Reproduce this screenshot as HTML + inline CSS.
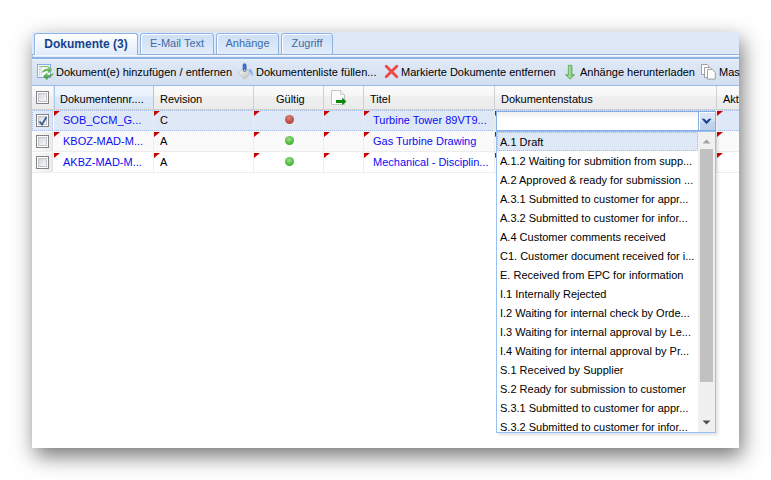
<!DOCTYPE html>
<html><head><meta charset="utf-8">
<style>
*{box-sizing:border-box;margin:0;padding:0}
html,body{width:771px;height:480px;overflow:hidden;background:#fff;font-family:"Liberation Sans",sans-serif;font-size:11px;color:#000}
div,svg{position:absolute}
#shadow{left:32px;top:32px;width:707px;height:416px;background:#fff;box-shadow:3px 8px 20px rgba(0,0,0,.55)}
.t{white-space:nowrap}
.tab{border:1px solid #8db2e3;border-bottom:none;border-radius:3px 3px 0 0;box-shadow:inset 1px 1px 0 #fff;background:linear-gradient(#cddff7,#e2ecfa);color:#416aa3;font-size:11px;text-align:center;line-height:19px}
.tab.act{background:linear-gradient(#fff 0,#f3f7fd 40%,#deebfb 100%);color:#15428b;font-weight:bold;font-size:12px;line-height:20px}
.hc{top:88px;height:23px;line-height:22px;white-space:nowrap;color:#000}
.vs{width:1px;background:#d0d0d0}
.vr{width:1px;background:#ededed}
.lnk{color:#0c0cf4}
.dirty{width:0;height:0;border-top:5px solid #c80000;border-right:6px solid transparent}
.cb{width:13px;height:13px;border:1px solid #838383;background:#fff}
.cb:after{content:"";box-sizing:border-box;position:absolute;left:1px;top:1px;width:9px;height:9px;border:1px solid #c2c6cc;background:linear-gradient(135deg,#d4d7dc,#f9f9f9)}
.li{left:496px;width:202px;height:19px;line-height:21px;padding-left:4px;white-space:nowrap;color:#000;font-size:11px}
</style></head><body>
<div id="shadow"></div>
<!-- tab strip -->
<div style="left:32px;top:32px;width:707px;height:25px;background:#dfe8f6"></div>
<div style="left:32px;top:54px;width:707px;height:1px;background:#8db2e3"></div>
<div style="left:32px;top:55px;width:707px;height:2px;background:linear-gradient(#f6f9fe 50%,#e4eefb 50%);border-left:1px solid #a9c6ec"></div>
<div style="left:32px;top:57px;width:707px;height:1px;background:#8cb1e2"></div>
<div style="left:32px;top:58px;width:707px;height:1px;background:#90b4e4"></div>
<div class="tab act" style="left:34px;top:33px;width:104px;height:22px">Dokumente (3)</div>
<div class="tab" style="left:140px;top:33px;width:74px;height:22px;border-bottom:1px solid #8db2e3">E-Mail Text</div>
<div class="tab" style="left:216px;top:33px;width:63px;height:22px;border-bottom:1px solid #8db2e3">Anhänge</div>
<div class="tab" style="left:281px;top:33px;width:52px;height:22px;border-bottom:1px solid #8db2e3">Zugriff</div>
<!-- toolbar -->
<div style="left:32px;top:59px;width:707px;height:27px;background:linear-gradient(#eef3fb 0,#dfe8f5 8%,#d9e4f3 50%,#d3dff0 100%);border-bottom:1px solid #99bbe8"></div>
<div class="t" style="left:56px;top:66px">Dokument(e) hinzufügen / entfernen</div>
<div class="t" style="left:256px;top:66px">Dokumentenliste füllen...</div>
<div class="t" style="left:401px;top:66px">Markierte Dokumente entfernen</div>
<div class="t" style="left:580px;top:66px">Anhänge herunterladen</div>
<div class="t" style="left:719px;top:66px">Mas</div>
<!-- header -->
<div style="left:32px;top:86px;width:707px;height:24px;background:linear-gradient(#fafafa 0,#f7f7f7 45%,#efefef 46%,#ebebeb 100%);border-bottom:1px solid #d0d0d0"></div>
<div style="left:54px;top:86px;width:100px;height:23px;background:linear-gradient(#eef5fd 0,#eaf2fc 45%,#dde9f8 46%,#d9e6f7 100%)"></div>
<div class="vs" style="left:53px;top:86px;height:23px;background:#e4e4e4"></div>
<div style="left:54px;top:86px;height:23px;width:1px;background:#a8c8f0"></div>
<div style="left:153px;top:86px;height:23px;width:1px;background:#a8c8f0"></div>
<div class="vs" style="left:253px;top:86px;height:23px"></div>
<div class="vs" style="left:323px;top:86px;height:23px"></div>
<div class="vs" style="left:363px;top:86px;height:23px"></div>
<div class="vs" style="left:494px;top:86px;height:23px"></div>
<div class="vs" style="left:716px;top:86px;height:23px"></div>
<div class="hc t" style="left:60px">Dokumentennr....</div>
<div class="hc t" style="left:160px">Revision</div>
<div class="hc t" style="left:276px">Gültig</div>
<div class="hc t" style="left:370px">Titel</div>
<div class="hc t" style="left:501px">Dokumentenstatus</div>
<div class="hc t" style="left:723px">Akt</div>
<div class="cb" style="left:36px;top:91px"></div>
<!-- header doc icon -->
<svg style="left:330px;top:90px" width="18" height="16" viewBox="0 0 18 16">
<path d="M1.5 0.5h9l4 4v10h-13z" fill="#fbfbfb" stroke="#c4c4c4"/>
<path d="M10.5 0.5v4h4" fill="#eee" stroke="#d0d0d0"/>
<path d="M6 9.9h6.2v-2.4l4.2 3.9-4.2 3.9v-2.4h-6.2z" fill="#098a09"/>
</svg>
<!-- rows -->
<div style="left:32px;top:110px;width:707px;height:21px;background:#dfe8f6;border-top:1px dotted #a3bae9;border-bottom:1px dotted #a3bae9"></div>
<div style="left:32px;top:131px;width:707px;height:21px;background:#fafafa;border-bottom:1px solid #ededed"></div>
<div style="left:32px;top:152px;width:707px;height:21px;background:#fff;border-bottom:1px solid #ededed"></div>
<div style="left:32px;top:111px;width:21px;height:19px;background:linear-gradient(90deg,#e6effb,#d8e5f6);border-right:1px solid #c4d8f2"></div>
<div style="left:32px;top:131px;width:21px;height:20px;background:linear-gradient(90deg,#fcfcfc 0,#f6f6f6 40%,#ececec 100%);border-right:1px solid #e0e0e0;border-top:1px solid #fff"></div>
<div style="left:32px;top:152px;width:21px;height:20px;background:linear-gradient(90deg,#fcfcfc 0,#f6f6f6 40%,#ececec 100%);border-right:1px solid #e0e0e0;border-top:1px solid #fff"></div>
<div style="left:32px;top:110px;width:1px;height:21px;border-left:1px dotted #a3bae9"></div>
<div class="vr" style="left:53px;top:110px;height:63px;background:#fff"></div>
<div class="vr" style="left:153px;top:110px;height:63px"></div>
<div class="vr" style="left:253px;top:110px;height:63px"></div>
<div class="vr" style="left:323px;top:110px;height:63px"></div>
<div class="vr" style="left:363px;top:110px;height:63px"></div>
<div class="vr" style="left:494px;top:110px;height:63px"></div>
<div class="vr" style="left:716px;top:110px;height:63px"></div>
<div class="cb" style="left:36px;top:114px"></div>
<svg style="left:38px;top:116px" width="10" height="10" viewBox="0 0 10 10"><path d="M1.5 5.5l2.5 3 4.5-7.5" fill="none" stroke="#3a5a98" stroke-width="1.8"/></svg>
<div class="cb" style="left:36px;top:135px"></div>
<div class="cb" style="left:36px;top:156px"></div>
<div class="t lnk" style="left:63px;top:114px">SOB_CCM_G...</div>
<div class="t lnk" style="left:63px;top:135px">KBOZ-MAD-M...</div>
<div class="t lnk" style="left:63px;top:156px">AKBZ-MAD-M...</div>
<div class="t" style="left:160px;top:114px">C</div>
<div class="t" style="left:160px;top:135px">A</div>
<div class="t" style="left:160px;top:156px">A</div>
<div class="t lnk" style="left:373px;top:114px">Turbine Tower 89VT9...</div>
<div class="t lnk" style="left:373px;top:135px">Gas Turbine Drawing</div>
<div class="t lnk" style="left:373px;top:156px">Mechanical - Disciplin...</div>
<div style="left:285px;top:115px;width:9px;height:9px;border-radius:50%;background:radial-gradient(circle at 45% 30%,#dc8378,#bd4d43 60%,#a23d33)"></div>
<div style="left:285px;top:136px;width:9px;height:9px;border-radius:50%;background:radial-gradient(circle at 45% 35%,#9ee08a,#4cb83a 60%,#3a9a2a)"></div>
<div style="left:285px;top:157px;width:9px;height:9px;border-radius:50%;background:radial-gradient(circle at 45% 35%,#9ee08a,#4cb83a 60%,#3a9a2a)"></div>
<div class="dirty" style="left:54px;top:111px"></div>
<div class="dirty" style="left:154px;top:111px"></div>
<div class="dirty" style="left:254px;top:111px"></div>
<div class="dirty" style="left:324px;top:111px"></div>
<div class="dirty" style="left:364px;top:111px"></div>
<div class="dirty" style="left:717px;top:111px"></div>
<div class="dirty" style="left:54px;top:132px"></div>
<div class="dirty" style="left:154px;top:132px"></div>
<div class="dirty" style="left:254px;top:132px"></div>
<div class="dirty" style="left:324px;top:132px"></div>
<div class="dirty" style="left:364px;top:132px"></div>
<div class="dirty" style="left:717px;top:132px"></div>
<div class="dirty" style="left:54px;top:153px"></div>
<div class="dirty" style="left:154px;top:153px"></div>
<div class="dirty" style="left:254px;top:153px"></div>
<div class="dirty" style="left:324px;top:153px"></div>
<div class="dirty" style="left:364px;top:153px"></div>
<div class="dirty" style="left:717px;top:153px"></div>
<div class="dirty" style="left:495px;top:111px"></div>
<div class="dirty" style="left:495px;top:132px"></div>
<div class="dirty" style="left:495px;top:153px"></div>
<!-- combo -->
<div style="left:496px;top:111px;width:220px;height:20px;border:1px solid #84afe3;background:linear-gradient(#eeeeee,#fff 40%)"></div>
<div style="left:698px;top:111px;width:18px;height:20px;border:1px solid #84afe3;background:linear-gradient(#dce8f8 0,#d5e3f6 50%,#c4d7f0 51%,#bcd0ec 100%);box-shadow:inset 1px 1px 0 #fff"></div>
<svg style="left:701px;top:118px" width="12" height="8" viewBox="0 0 12 8"><path d="M0.6 0.7H3.3L5.6 3.1 7.9 0.7H10.6L5.6 6.3z" fill="#1f3f8c"/></svg>
<!-- list -->
<div style="left:496px;top:131px;width:220px;height:302px;border:1px solid #98c0f4;background:#fff;box-shadow:2px 2px 3px rgba(0,0,0,.12)"></div>
<div style="left:497px;top:132px;width:201px;height:19px;background:#dfe8f6;border:1px dotted #a3bae9"></div>
<div class="li" style="top:132px">A.1 Draft</div>
<div class="li" style="top:151px">A.1.2 Waiting for submition from supp...</div>
<div class="li" style="top:170px">A.2 Approved &amp; ready for submission ...</div>
<div class="li" style="top:189px">A.3.1 Submitted to customer for appr...</div>
<div class="li" style="top:208px">A.3.2 Submitted to customer for infor...</div>
<div class="li" style="top:227px">A.4 Customer comments received</div>
<div class="li" style="top:246px">C1. Customer document received for i...</div>
<div class="li" style="top:265px">E. Received from EPC for information</div>
<div class="li" style="top:284px">I.1 Internally Rejected</div>
<div class="li" style="top:303px">I.2 Waiting for internal check by Orde...</div>
<div class="li" style="top:322px">I.3 Waiting for internal approval by Le...</div>
<div class="li" style="top:341px">I.4 Waiting for internal approval by Pr...</div>
<div class="li" style="top:360px">S.1 Received by Supplier</div>
<div class="li" style="top:379px">S.2 Ready for submission to customer</div>
<div class="li" style="top:398px">S.3.1 Submitted to customer for appr...</div>
<div class="li" style="top:417px">S.3.2 Submitted to customer for infor...</div>
<div style="left:698px;top:132px;width:17px;height:300px;background:#f0f0f0"></div>
<div style="left:700px;top:149px;width:13px;height:233px;background:#c1c1c1"></div>
<svg style="left:702px;top:138px" width="9" height="6" viewBox="0 0 9 6"><path d="M0.5 5.5L4.5 1.5 8.5 5.5z" fill="#a3a3a3"/></svg>
<svg style="left:702px;top:420px" width="9" height="6" viewBox="0 0 9 6"><path d="M0.5 0.5L4.5 4.5 8.5 0.5z" fill="#505050"/></svg>
<!-- toolbar icons -->
<svg style="left:36px;top:62px" width="18" height="18" viewBox="0 0 18 18">
<defs><linearGradient id="ga" x1="0" y1="0" x2="0" y2="1"><stop offset="0" stop-color="#a6dc98"/><stop offset="1" stop-color="#3e9b34"/></linearGradient>
<linearGradient id="gb" x1="0" y1="0" x2="0" y2="1"><stop offset="0" stop-color="#8fcf80"/><stop offset="1" stop-color="#2f8a28"/></linearGradient></defs>
<rect x="1.5" y="2.5" width="13" height="13" fill="#fff" stroke="#86abe0"/>
<path d="M3 4.6h9" stroke="#79bf6c" stroke-width="1.1"/>
<rect x="3" y="6" width="3" height="8.5" fill="#c8d9f1"/>
<rect x="4" y="7" width="1.2" height="1.2" fill="#fff"/><rect x="4" y="9" width="1.2" height="1.2" fill="#fff"/><rect x="4" y="11" width="1.2" height="1.2" fill="#fff"/><rect x="4" y="13" width="1.2" height="1.2" fill="#fff"/>
<path d="M6.2 10.5C7 7.8 9.5 6.8 12.3 6.8V4.2L16 7.6 12.3 11V8.8C10 8.8 8 9.3 6.2 10.5z" fill="url(#ga)" stroke="#4da844" stroke-width="0.4"/>
<path d="M17.3 11.6C16.5 14.3 14 15.2 11.2 15.2V17.8L7.3 14.3 11.2 10.9V13.2C13.5 13.2 15.5 12.8 17.3 11.6z" fill="url(#gb)" stroke="#2e8a28" stroke-width="0.4"/>
</svg>
<svg style="left:236px;top:62px" width="20" height="20" viewBox="0 0 20 20">
<defs><linearGradient id="gk" x1="0" y1="0" x2="1" y2="1"><stop offset="0" stop-color="#fdfdfd"/><stop offset="1" stop-color="#bdbdbd"/></linearGradient></defs>
<path d="M2.3 11L8.5 4.8 14.7 11 8.5 17.2z" fill="url(#gk)" stroke="#b4b4b4" stroke-width="0.7"/>
<path d="M13.2 6.6C15.6 7.4 17.2 9.3 16.9 12.4 16.8 13.2 16.4 14 16 14.6 15.6 12.2 14.5 10.5 12.6 9.4z" fill="#88b8ea"/>
<rect x="7" y="1.6" width="3.2" height="8" rx="1.6" fill="#3f73c6" stroke="#2e5cae" stroke-width="0.5"/>
<circle cx="8.6" cy="8.2" r="0.8" fill="#e8f0fb"/>
</svg>
<svg style="left:384px;top:64px" width="15" height="15" viewBox="0 0 15 15">
<path d="M2.2 2.2l10.6 10.6M12.8 2.2L2.2 12.8" stroke="#f24545" stroke-width="2.8" stroke-linecap="round"/>
</svg>
<svg style="left:565px;top:64px" width="11" height="16" viewBox="0 0 11 16">
<defs><linearGradient id="gd" x1="0" y1="0" x2="1" y2="0"><stop offset="0" stop-color="#4faa42"/><stop offset=".45" stop-color="#a9dd9c"/><stop offset="1" stop-color="#4fa844"/></linearGradient></defs>
<path d="M3.3 1.3h3.6v9.4h2.6l-4.5 4.5-4.5-4.5h2.8z" fill="url(#gd)" stroke="#4b9e40" stroke-width="0.7"/>
</svg>
<svg style="left:700px;top:63px" width="18" height="18" viewBox="0 0 18 18">
<path d="M1.5 1.5h6l1 1v9h-7z" fill="#fff" stroke="#979797" stroke-width="0.9"/>
<path d="M4.5 4.5h6l1 1v9h-7z" fill="#fff" stroke="#979797" stroke-width="0.9"/>
<path d="M7.5 6.5h5l2.8 2.8v6.8h-7.8z" fill="#fdfdfd" stroke="#979797" stroke-width="0.9"/>
</svg>
</body></html>
